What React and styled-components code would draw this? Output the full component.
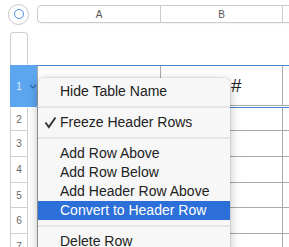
import React from 'react';
import styled, { createGlobalStyle } from 'styled-components';

const GlobalStyle = createGlobalStyle`
  html, body {
    margin: 0;
    padding: 0;
    background: #ffffff;
  }
  body {
    font-family: "Liberation Sans", Arial, sans-serif;
  }
`;

const Page = styled.div`
  position: relative;
  width: 289px;
  height: 247px;
  overflow: hidden;
  background: #ffffff;
`;

const TopRow = styled.div`
  display: flex;
  align-items: center;
  height: 28px;
  padding-left: 8px;
`;

const SelectAll = styled.div`
  width: 21px;
  height: 21px;
  box-sizing: border-box;
  border: 1px solid #c9c9c9;
  border-radius: 50%;
  background: #fff;
  margin-right: 8px;
  display: flex;
  align-items: center;
  justify-content: center;
  flex-shrink: 0;

  &::after {
    content: '';
    width: 10px;
    height: 10px;
    box-sizing: border-box;
    border: 1.5px solid #4a90e2;
    border-radius: 50%;
  }
`;

const ColumnBar = styled.div`
  display: flex;
  height: 18px;
  flex: 1;
  margin-right: -20px;
  box-sizing: border-box;
  border: 1px solid #cbcbcb;
  border-radius: 4px;
  background: #fff;
  box-shadow: 0 1px 2px rgba(0, 0, 0, 0.06);
`;

const ColumnLabel = styled.div`
  width: ${(p) => p.$width}px;
  flex: ${(p) => (p.$width ? 'none' : 1)};
  box-sizing: border-box;
  border-right: ${(p) => (p.$width ? '1px solid #cbcbcb' : 'none')};
  display: flex;
  align-items: center;
  justify-content: center;
  font-size: 10px;
  color: #555;
`;

const Body = styled.div`
  display: flex;
`;

const RowHeaders = styled.div`
  width: 37px;
  padding-left: 10px;
  box-sizing: border-box;
  display: flex;
  flex-direction: column;
  flex-shrink: 0;
`;

const HeaderCap = styled.div`
  width: 18px;
  height: 33px;
  margin-top: 4px;
  box-sizing: border-box;
  border: 1px solid #cfcfcf;
  border-bottom: none;
  border-radius: 4px 4px 0 0;
`;

const SelectedRowHeader = styled.div`
  width: 27px;
  height: 42px;
  background: #5ca6ef;
  display: flex;
  align-items: center;
  font-size: 10px;
  color: rgba(255, 255, 255, 0.85);
`;

const NumberSlot = styled.span`
  width: 18px;
  text-align: center;
`;

const Chevron = styled.svg`
  width: 8px;
  height: 5px;
  margin-left: 1px;
  margin-top: 1px;
`;

const RowHeader = styled.div`
  width: 18px;
  height: ${(p) => p.$h}px;
  box-sizing: border-box;
  border: 1px solid #cfcfcf;
  border-top: none;
  background: #fff;
  display: flex;
  align-items: center;
  justify-content: center;
  font-size: 10px;
  color: #666;
`;

const Table = styled.div`
  flex: 1;
  padding-top: 37px;
  display: flex;
  flex-direction: column;
  margin-right: -20px;
`;

const HeaderRow = styled.div`
  display: flex;
  height: 41px;
  box-sizing: border-box;
  border-top: 1px solid #4a86cc;
  border-bottom: 1px solid #a9a9a9;
`;

const HeaderRule = styled.div`
  height: 1px;
  margin-top: 1px;
  background: #4a86cc;
`;

const Row = styled.div`
  display: flex;
  height: ${(p) => p.$h}px;
  box-sizing: border-box;
  border-bottom: 1px solid #a9a9a9;
`;

const Cell = styled.div`
  width: ${(p) => p.$width}px;
  flex: ${(p) => (p.$width ? 'none' : 1)};
  box-sizing: border-box;
  border-left: ${(p) => (p.$first ? '1px solid #a9a9a9' : 'none')};
  border-right: ${(p) => (p.$width ? '1px solid #a9a9a9' : 'none')};
  display: flex;
  align-items: center;
  padding-left: ${(p) => p.$pad || 0}px;
  font-size: 19px;
  color: #222;
`;

const Menu = styled.div`
  position: absolute;
  left: 38px;
  top: 78px;
  width: 192px;
  padding-top: 4px;
  background: #f7f7f7;
  border-radius: 5px 5px 0 0;
  box-shadow: 0 0 0 0.5px rgba(0, 0, 0, 0.12), 0 3px 11px rgba(0, 0, 0, 0.28);
  font-size: 14px;
  color: #222;
`;

const Item = styled.div`
  position: relative;
  height: 19px;
  line-height: 19px;
  padding-left: 22px;
  white-space: nowrap;
  background: ${(p) => (p.$active ? '#2d6fd8' : 'transparent')};
  color: ${(p) => (p.$active ? '#ffffff' : '#222')};
`;

const Check = styled.svg`
  position: absolute;
  left: 6px;
  top: 3px;
  width: 13px;
  height: 13px;
`;

const Separator = styled.div`
  height: 2px;
  margin: 5px 0;
  background: #e5e5e5;
`;

const rowHeights = [23, 26, 26, 25, 26, 26];

const App = () => {
  return (
    <Page>
      <GlobalStyle />
      <TopRow>
        <SelectAll />
        <ColumnBar>
          <ColumnLabel $width={123}>A</ColumnLabel>
          <ColumnLabel $width={122}>B</ColumnLabel>
          <ColumnLabel />
        </ColumnBar>
      </TopRow>

      <Body>
        <RowHeaders>
          <HeaderCap />
          <SelectedRowHeader>
            <NumberSlot>1</NumberSlot>
            <Chevron viewBox="0 0 8 5">
              <path d="M1 1 L4 4 L7 1" fill="none" stroke="#2f68a8" strokeWidth="1.1" />
            </Chevron>
          </SelectedRowHeader>
          <div style={{ height: 1 }} />
          {rowHeights.map((h, i) => (
            <RowHeader key={i} $h={h}>{i + 2}</RowHeader>
          ))}
        </RowHeaders>

        <Table>
          <HeaderRow>
            <Cell $first $width={124} />
            <Cell $width={122} $pad={70}>#</Cell>
            <Cell />
          </HeaderRow>
          <HeaderRule />
          {rowHeights.map((h, i) => (
            <Row key={i} $h={h}>
              <Cell $first $width={124} />
              <Cell $width={122} />
              <Cell />
            </Row>
          ))}
        </Table>
      </Body>

      <Menu>
        <Item>Hide Table Name</Item>
        <Separator />
        <Item>
          <Check viewBox="0 0 13 13">
            <path d="M1.5 6.5 L4.8 11 L11.5 1.5" fill="none" stroke="#333" strokeWidth="1.9" />
          </Check>
          Freeze Header Rows
        </Item>
        <Separator />
        <Item>Add Row Above</Item>
        <Item>Add Row Below</Item>
        <Item>Add Header Row Above</Item>
        <Item $active>Convert to Header Row</Item>
        <Separator />
        <Item>Delete Row</Item>
      </Menu>
    </Page>
  );
};

export default App;
